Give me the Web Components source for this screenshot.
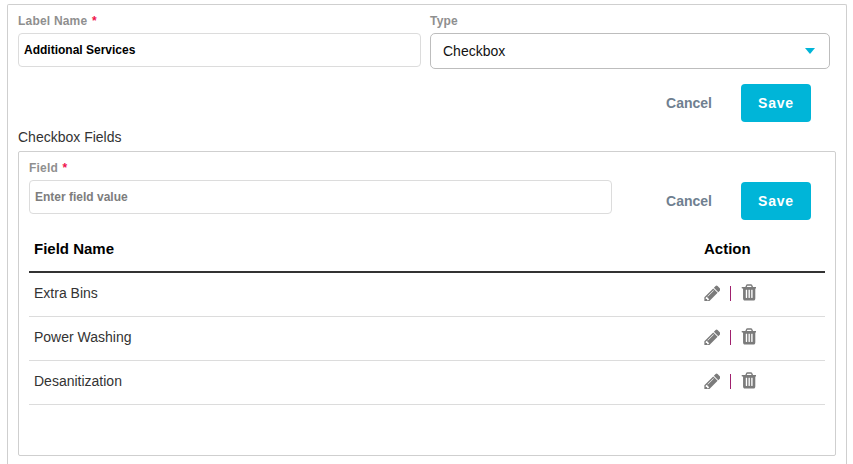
<!DOCTYPE html>
<html>
<head>
<meta charset="utf-8">
<title>Checkbox Fields</title>
<style>
  html, body { margin: 0; height: 464px; overflow: hidden; background: #fff; }
  body { font-family: "Liberation Sans", Arial, sans-serif; }
</style>
</head>
<body>
<label-editor></label-editor>

<script>
const fieldTemplate = document.createElement('template')
fieldTemplate.innerHTML = `
  <style>
    :host { display: block; }
    label {
      display: block;
      height: 16px;
      font-size: 12px;
      line-height: 18px;
      font-weight: 700;
      letter-spacing: 0.2px;
      color: #8f8f8f;
      margin-bottom: 5px;
    }
    b { color: #f0134d; margin-left: 1px; }
    .box {
      box-sizing: border-box;
      height: 34px;
      padding: 0 5px;
      display: flex;
      align-items: center;
      border: 1px solid #dcdcdc;
      border-radius: 4px;
      font-size: 12px;
      font-weight: 700;
      color: var(--value-color, #000);
    }
  </style>
  <label></label>
  <div class="box"><slot></slot></div>
`
class RField extends HTMLElement {
  constructor() {
    super();
    this.attachShadow({ mode: "open" });
    this.shadowRoot.append(fieldTemplate.content.cloneNode(true))
    this._label = this.shadowRoot.querySelector('label')
  }

  connectedCallback() {
    this._label.textContent = this.getAttribute('label') ?? ''
    if (this.hasAttribute('required')) {
      const star = document.createElement('b')
      star.textContent = ' *'
      this._label.append(star)
    }
  }
}
customElements.define('r-field', RField);

const selectTemplate = document.createElement('template')
selectTemplate.innerHTML = `
  <style>
    :host { display: block; }
    label {
      display: block;
      height: 16px;
      font-size: 12px;
      line-height: 18px;
      font-weight: 700;
      letter-spacing: 0.2px;
      color: #8f8f8f;
      margin-bottom: 5px;
    }
    .box {
      box-sizing: border-box;
      height: 36px;
      padding: 0 14px 0 12px;
      display: flex;
      align-items: center;
      justify-content: space-between;
      border: 1px solid #bdbdbd;
      border-radius: 5px;
      font-size: 14px;
      color: #111;
    }
    i {
      width: 0;
      height: 0;
      border-left: 5.5px solid transparent;
      border-right: 5.5px solid transparent;
      border-top: 6px solid #00b5d8;
    }
  </style>
  <label>Type</label>
  <div class="box"><slot></slot><i></i></div>
`
class RSelect extends HTMLElement {
  constructor() {
    super();
    this.attachShadow({ mode: "open" });
    this.shadowRoot.append(selectTemplate.content.cloneNode(true))
  }
}
customElements.define('r-select', RSelect);

const actionsTemplate = document.createElement('template')
actionsTemplate.innerHTML = `
  <style>
    :host { display: flex; align-items: center; gap: 29px; }
    span {
      font-size: 14px;
      font-weight: 700;
      color: #6f7f90;
    }
    button {
      width: 70px;
      height: 38px;
      border: 0;
      padding: 0;
      border-radius: 4px;
      background: #00b5d8;
      color: #fff;
      font: 700 14px "Liberation Sans", Arial, sans-serif;
      letter-spacing: 0.8px;
    }
  </style>
  <span>Cancel</span>
  <button type="button">Save</button>
`
class RActions extends HTMLElement {
  constructor() {
    super();
    this.attachShadow({ mode: "open" });
    this.shadowRoot.append(actionsTemplate.content.cloneNode(true))
  }
}
customElements.define('r-actions', RActions);

const rowTemplate = document.createElement('template')
rowTemplate.innerHTML = `
  <style>
    :host {
      display: flex;
      align-items: center;
      box-sizing: border-box;
      height: 44px;
      padding: 0 5px 4px;
      border-bottom: 1px solid #dcdcdc;
      font-size: 14px;
      color: #333;
    }
    .name { flex: 1; }
    .action { width: 116px; display: flex; align-items: center; }
    svg { display: block; fill: #7b7b7b; }
    .pencil { margin-left: -1px; }
    .sep { width: 1px; height: 15px; background: #a0206e; margin: 2px 10px 0 10px; }
  </style>
  <div class="name"><slot></slot></div>
  <div class="action">
    <svg class="pencil" width="17" height="17" viewBox="0 0 1600 1600"><path d="M491 1536l91-91-235-235-91 91v107h128v128h107zm523-928q0-22-22-22-10 0-17 7l-542 542q-7 7-7 17 0 22 22 22 10 0 17-7l542-542q7-7 7-17zm-54-192l416 416-832 832h-416v-416zm683 96q0 53-37 90l-166 166-416-416 166-165q36-38 90-38 53 0 91 38l235 234q37 39 37 91z"/></svg>
    <div class="sep"></div>
    <svg width="15" height="17" viewBox="128 100 1408 1600"><path d="M704 1376v-704q0-14-9-23t-23-9h-64q-14 0-23 9t-9 23v704q0 14 9 23t23 9h64q14 0 23-9t9-23zm256 0v-704q0-14-9-23t-23-9h-64q-14 0-23 9t-9 23v704q0 14 9 23t23 9h64q14 0 23-9t9-23zm256 0v-704q0-14-9-23t-23-9h-64q-14 0-23 9t-9 23v704q0 14 9 23t23 9h64q14 0 23-9t9-23zm-544-992h448l-48-117q-7-9-17-11h-317q-10 2-17 11zm928 32v64q0 14-9 23t-23 9h-96v948q0 83-47 143.500t-113 60.500h-832q-66 0-113-58.500t-47-141.500v-952h-96q-14 0-23-9t-9-23v-64q0-14 9-23t23-9h309l70-167q15-37 54-63t79-26h320q40 0 79 26t54 63l70 167h309q14 0 23 9t9 23z"/></svg>
  </div>
`
class RFieldRow extends HTMLElement {
  constructor() {
    super();
    this.attachShadow({ mode: "open" });
    this.shadowRoot.append(rowTemplate.content.cloneNode(true))
  }
}
customElements.define('r-field-row', RFieldRow);

const tableTemplate = document.createElement('template')
tableTemplate.innerHTML = `
  <style>
    :host { display: block; }
    .head {
      display: flex;
      align-items: center;
      box-sizing: border-box;
      height: 53px;
      padding: 6px 5px 0;
      border-bottom: 2px solid #333;
      font-size: 15px;
      font-weight: 700;
      color: #000;
    }
    .head div:first-child { flex: 1; }
    .head div:last-child { width: 116px; }
  </style>
  <div class="head"><div>Field Name</div><div>Action</div></div>
  <slot></slot>
`
class RFieldTable extends HTMLElement {
  constructor() {
    super();
    this.attachShadow({ mode: "open" });
    this.shadowRoot.append(tableTemplate.content.cloneNode(true))
  }
}
customElements.define('r-field-table', RFieldTable);

const editorTemplate = document.createElement('template')
editorTemplate.innerHTML = `
  <style>
    :host {
      display: block;
      box-sizing: border-box;
      width: 840px;
      height: 480px;
      margin: 4px 0 0 7px;
      padding: 7px 10px 0 10px;
      border: 1px solid #cfcfcf;
      border-bottom: 0;
      border-radius: 2px 2px 0 0;
    }
    .top { display: grid; grid-template-columns: 403px 400px; column-gap: 9px; }
    .top-actions { display: flex; justify-content: flex-end; padding: 15px 25px 0 0; }
    h4 {
      margin: 7px 0 0;
      height: 16px;
      font-size: 14px;
      line-height: 16px;
      font-weight: 400;
      color: #333;
    }
    .fields {
      box-sizing: border-box;
      width: 818px;
      height: 305px;
      margin-top: 6px;
      padding: 7px 10px 0;
      border: 1px solid #cfcfcf;
      border-radius: 2px;
    }
    .add { display: flex; align-items: flex-start; }
    .add r-field { width: 583px; --value-color: #7d7d7d; }
    .add r-actions { margin: 23px 0 0 auto; padding-right: 14px; }
  </style>
  <div class="top">
    <r-field label="Label Name" required>Additional Services</r-field>
    <r-select>Checkbox</r-select>
  </div>
  <div class="top-actions"><r-actions></r-actions></div>
  <h4>Checkbox Fields</h4>
  <div class="fields">
    <div class="add">
      <r-field label="Field" required>Enter field value</r-field>
      <r-actions></r-actions>
    </div>
    <r-field-table>
      <r-field-row>Extra Bins</r-field-row>
      <r-field-row>Power Washing</r-field-row>
      <r-field-row>Desanitization</r-field-row>
    </r-field-table>
  </div>
`
class LabelEditor extends HTMLElement {
  constructor() {
    super();
    this.attachShadow({ mode: "open" });
    this.shadowRoot.append(editorTemplate.content.cloneNode(true))
  }
}
customElements.define('label-editor', LabelEditor);
</script>
</body>
</html>
